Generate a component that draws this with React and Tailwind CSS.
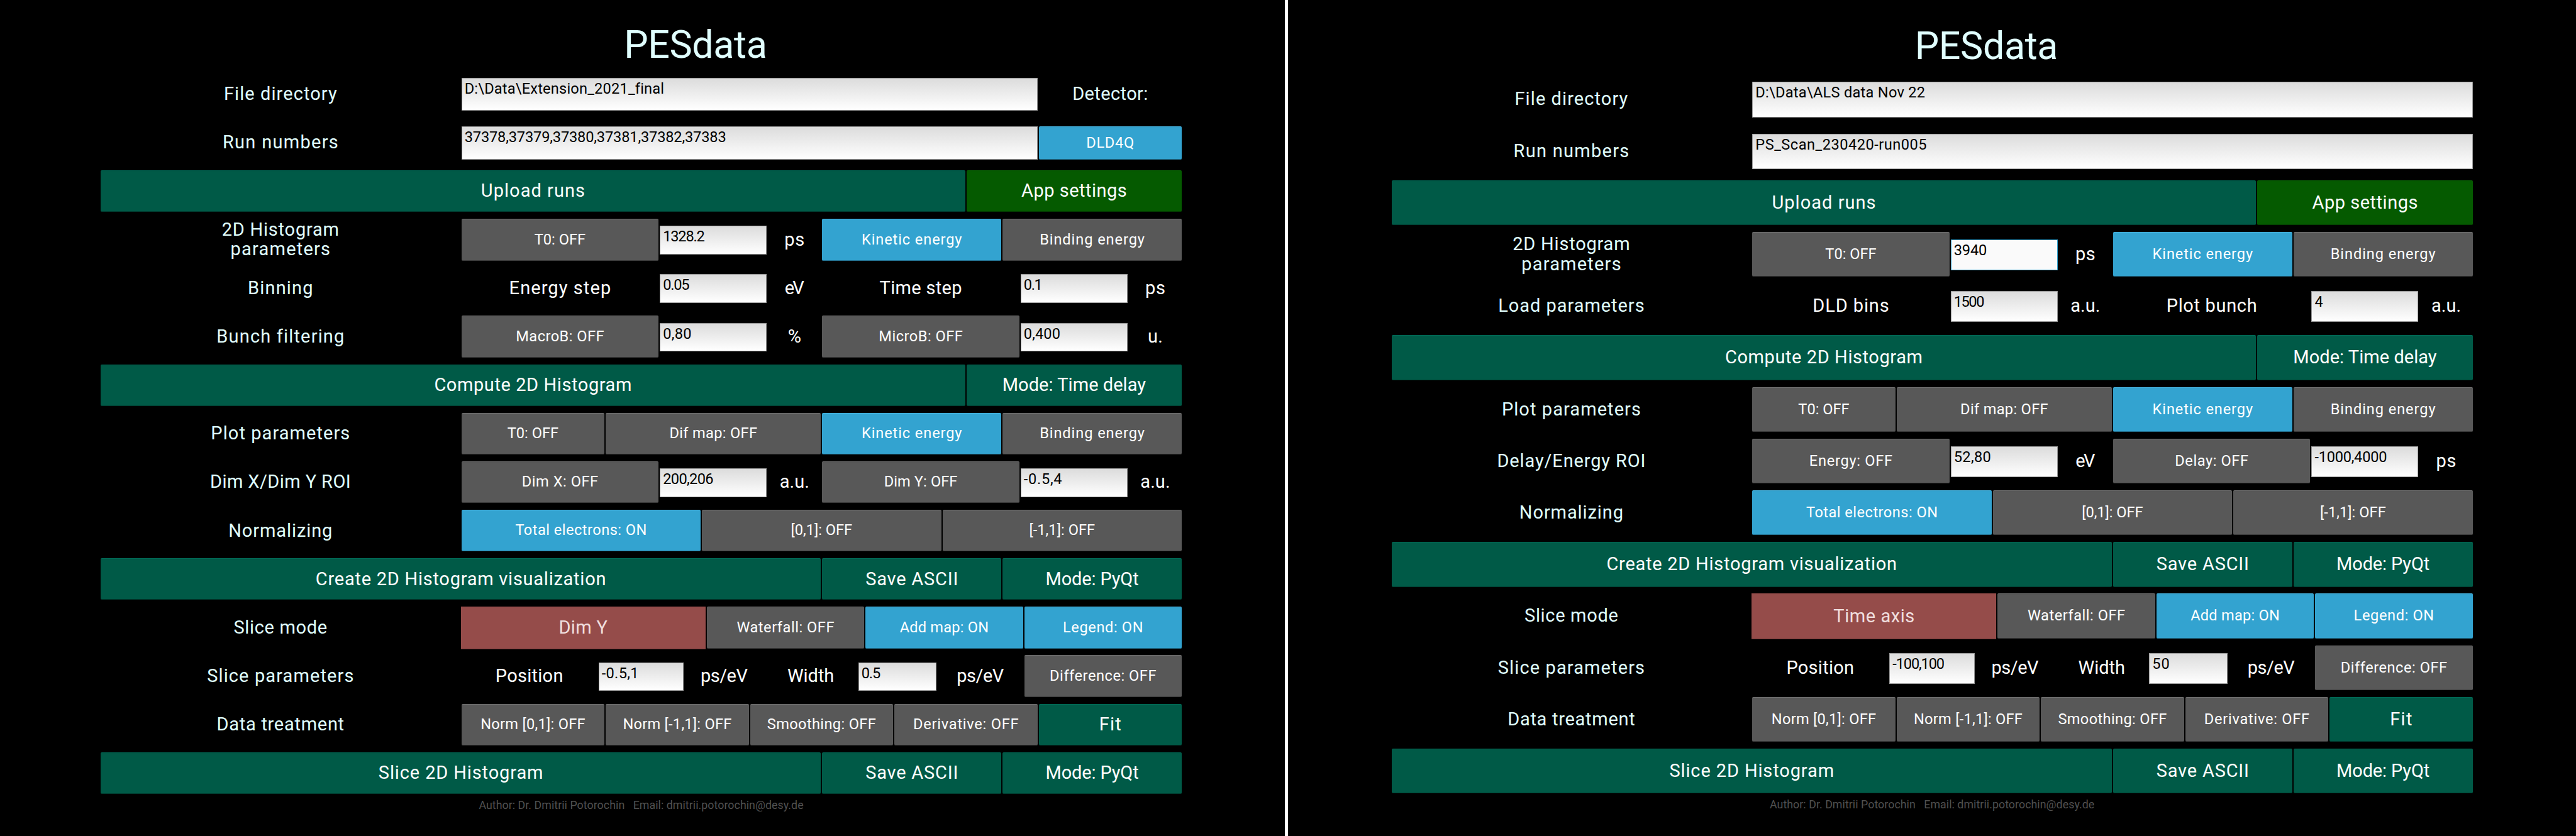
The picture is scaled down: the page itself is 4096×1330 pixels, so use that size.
import { useLayoutEffect, useRef } from "react";

const S = 0.948148;

// Spreads the letters of a label so that its ink takes `w` design units.
function Fit({ w, children }) {
  const ref = useRef(null);
  useLayoutEffect(() => {
    const el = ref.current;
    const cs = getComputedStyle(el);
    const ctx = document.createElement("canvas").getContext("2d");
    ctx.font = `${cs.fontWeight} ${cs.fontSize} ${cs.fontFamily}`;
    const m = ctx.measureText(children);
    const ink = m.actualBoundingBoxLeft + m.actualBoundingBoxRight;
    if (children.length > 1) {
      const ls = (w * S - ink) / (children.length - 1);
      el.style.letterSpacing = `${ls}px`;
      el.style.marginRight = `${-ls}px`;
    }
  }, [w, children]);
  return <span ref={ref} className="whitespace-pre">{children}</span>;
}

const TONES = {
  green: "bg-[#005a47] border-t-[#006b57] border-b-[#003d30]",
  forest: "bg-[#055a00] border-t-[#0a6b05] border-b-[#033d00]",
  gray: "bg-[#585858] border-t-[#707070] border-b-[#3a3a3a]",
  blue: "bg-[#33a3d0] border-t-[#45b2de] border-b-[#23708f]",
};

function Button({ tone, big, t, w, h }) {
  return (
    <div className={`mx-px flex items-center justify-center rounded-[2px] border-y text-white ${h} ${TONES[tone]} ${big ? "text-[29px]" : "text-[23.6px]"}`}>
      <Fit w={w}>{t}</Fit>
    </div>
  );
}

function Cell({ cell, tall }) {
  const [kind, t, w] = cell;
  const rowH = tall ? "h-[71.3px]" : "h-[66.4px]";
  if (kind === "red")
    return (
      <div className={`mr-px flex items-center justify-center border-b border-[#6b3635] bg-[#954c4a] text-[29px] text-[#f0dfdf] ${tall ? "h-[73px]" : "h-[68px]"}`}>
        <Fit w={w}>{t}</Fit>
      </div>
    );
  if (kind === "label" || kind === "text")
    return (
      <div className={`flex items-center justify-center text-center text-[29px] leading-[31.3px] ${rowH} ${kind === "label" ? "text-[#e0ffff]" : "text-white"}`}>
        {Array.isArray(t) ? (
          <div className="flex flex-col items-center">
            {t.map((line, i) => <Fit key={line} w={w[i]}>{line}</Fit>)}
          </div>
        ) : (
          <Fit w={w}>{t}</Fit>
        )}
      </div>
    );
  if (kind === "input" || kind === "wide" || kind === "focus") {
    const size = kind === "wide"
      ? tall ? "mt-[8px] h-[56.6px]" : "mt-[7.5px] h-[52.3px]"
      : tall ? "mt-[12px] h-[49px]" : "mt-[11.2px] h-[45.8px]";
    const look = kind === "focus"
      ? "border-[#33a3d0] bg-[#fafafa]"
      : "border-[#9a9a9a] bg-linear-to-b from-[#dcdcdc] to-white";
    return (
      <div className={`mx-px border pl-[4px] pt-[4px] text-[23.6px] leading-[25px] text-black ${size} ${look}`}>
        <Fit w={w}>{t}</Fit>
      </div>
    );
  }
  if (kind === "detector")
    return (
      <div className={tall ? "pt-[8px]" : "pt-[7px]"}>
        <Button tone="blue" t={t} w={w} h="h-[53.6px]" />
      </div>
    );
  const [tone, big] = kind.split("-");
  return <Button tone={tone} big={big === "big"} t={t} w={w} h={rowH} />;
}

const COLS = {
  full: "grid-cols-[605fr_1210fr]",
  file: "grid-cols-[605fr_968fr_242fr]",
  bar2: "grid-cols-[4fr_1fr]",
  bar3: "grid-cols-[4fr_1fr_1fr]",
  energy: "grid-cols-[6050fr_3327fr_1815fr_908fr_3025fr_3025fr]",
  pair: "grid-cols-[6050fr_3327fr_1815fr_908fr_3327fr_1815fr_908fr]",
  plot: "grid-cols-[6050fr_2420fr_3630fr_3025fr_3025fr]",
  thirds: "grid-cols-[3fr_2fr_2fr_2fr]",
  mode: "grid-cols-[6050fr_4114fr_2662fr_2662fr_2662fr]",
  slice: "grid-cols-[6050fr_2299fr_1452fr_1331fr_1573fr_1331fr_1452fr_2662fr]",
  data: "grid-cols-[605fr_242fr_242fr_242fr_242fr_242fr]",
};

const T0 = ["gray", "T0: OFF", 85.7];
const KIN = ["blue", "Kinetic energy", 167];
const BIND = ["gray", "Binding energy", 174.7];
const PS = ["text", "ps", 31.6];
const EV = ["text", "eV", 32.3];
const AU = ["text", "a.u.", 47];
const PSEV = ["text", "ps/eV", 78.6];
const SAVE = ["green-big", "Save ASCII", 152.2];
const PYQT = ["green-big", "Mode: PyQt", 153.6];
const FILE = ["label", "File directory", 187.8];
const RUNS = ["label", "Run numbers", 190.7];
const HIST = ["label", ["2D Histogram", "parameters"], [194, 165]];

const upload = ["bar2", [["green-big", "Upload runs", 172], ["forest-big", "App settings", 176]]];
const compute = ["bar2", [["green-big", "Compute 2D Histogram", 328.6], ["green-big", "Mode: Time delay", 239.5]]];
const plot = ["plot", [["label", "Plot parameters", 230], T0, ["gray", "Dif map: OFF", 146], KIN, BIND]];
const norm = ["thirds", [["label", "Normalizing", 170.7], ["blue", "Total electrons: ON", 218.5], ["gray", "[0,1]: OFF", 101.7], ["gray", "[-1,1]: OFF", 109.4]]];
const create = ["bar3", [["green-big", "Create 2D Histogram visualization", 484.7], SAVE, PYQT]];
const mode = (t, w) => ["mode", [["label", "Slice mode", 155.5], ["red", t, w], ["gray", "Waterfall: OFF", 163.5], ["blue", "Add map: ON", 147.3], ["blue", "Legend: ON", 131.5]]];
const slice = (p, pw, q, qw) => ["slice", [["label", "Slice parameters", 244], ["text", "Position", 110.3], ["input", p, pw], PSEV, ["text", "Width", 77.5], ["input", q, qw], PSEV, ["gray", "Difference: OFF", 177.5]]];
const data = ["data", [["label", "Data treatment", 211], ["gray", "Norm [0,1]: OFF", 174.3], ["gray", "Norm [-1,1]: OFF", 181.3], ["gray", "Smoothing: OFF", 182.4], ["gray", "Derivative: OFF", 175.4], ["green-big", "Fit", 34.4]]];
const sliceBar = ["bar3", [["green-big", "Slice 2D Histogram", 273.4], SAVE, PYQT]];

const LEFT = [
  ["file", [FILE, ["wide", "D:\\Data\\Extension_2021_final", 331], ["label", "Detector:", 123.5]]],
  ["file", [RUNS, ["wide", "37378,37379,37380,37381,37382,37383", 436.4], ["detector", "DLD4Q", 78]]],
  upload,
  ["energy", [HIST, T0, ["input", "1328.2", 69], PS, KIN, BIND]],
  ["pair", [["label", "Binning", 105.6], ["text", "Energy step", 167], ["input", "0.05", 43.5], EV, ["text", "Time step", 136.8], ["input", "0.1", 26], PS]],
  ["pair", [["label", "Bunch filtering", 209.5], ["gray", "MacroB: OFF", 146.7], ["input", "0,80", 45.6], ["text", "%", 20.3], ["gray", "MicroB: OFF", 139.6], ["input", "0,400", 59], ["text", "u.", 22.5]]],
  compute,
  plot,
  ["pair", [["label", "Dim X/Dim Y ROI", 231.8], ["gray", "Dim X: OFF", 127], ["input", "200,206", 83.5], AU, ["gray", "Dim Y: OFF", 122], ["input", "-0.5,4", 63.8], AU]],
  norm,
  create,
  mode("Dim Y", 80.4),
  slice("-0.5,1", 57.5, "0.5", 30.9),
  data,
  sliceBar,
];

const RIGHT = [
  ["full", [FILE, ["wide", "D:\\Data\\ALS data Nov 22", 283.3]]],
  ["full", [RUNS, ["wide", "PS_Scan_230420-run005", 285.8]]],
  upload,
  ["energy", [HIST, T0, ["focus", "3940", 53], PS, KIN, BIND]],
  ["pair", [["label", "Load parameters", 242], ["text", "DLD bins", 125], ["input", "1500", 49], AU, ["text", "Plot bunch", 148.7], ["input", "4", 12.6], AU]],
  compute,
  plot,
  ["pair", [["label", "Delay/Energy ROI", 244.7], ["gray", "Energy: OFF", 138.5], ["input", "52,80", 60], EV, ["gray", "Delay: OFF", 122], ["input", "-1000,4000", 120], PS]],
  norm,
  create,
  mode("Time axis", 135),
  slice("-100,100", 86, "50", 26.7),
  data,
  sliceBar,
];

function Panel({ rows, tall }) {
  return (
    <div className={`flex w-[2048px] flex-col ${tall ? "pl-[163.6px]" : "border-r-[5px] border-white pl-[159px]"}`}>
      <div className={`flex w-[1721px] items-center justify-center pl-[173px] text-[61px] text-[#e0ffff] ${tall ? "h-[122.3px] pt-[26px]" : "h-[116.7px] pt-[26px]"}`}>
        <Fit w={231.5}>PESdata</Fit>
      </div>
      {rows.map(([cols, cells], i) => (
        <div key={i} className={`grid w-[1721px] shrink-0 items-start ${COLS[cols]} ${tall ? "h-[82.23px]" : "h-[77.15px]"}`}>
          {cells.map((c, j) => <Cell key={j} cell={c} tall={tall} />)}
        </div>
      ))}
      <div className="-mt-[5px] flex w-[1721px] justify-center text-[17.8px] leading-[24px] text-[#505050]">
        <Fit w={544}>{"Author: Dr. Dmitrii Potorochin   Email: dmitrii.potorochin@desy.de"}</Fit>
      </div>
    </div>
  );
}

export default function App() {
  return (
    <div className="flex h-[1330px] w-[4096px] overflow-hidden bg-black font-[Roboto,'Liberation_Sans',sans-serif] font-[450]">
      <Panel rows={LEFT} />
      <Panel rows={RIGHT} tall />
    </div>
  );
}
